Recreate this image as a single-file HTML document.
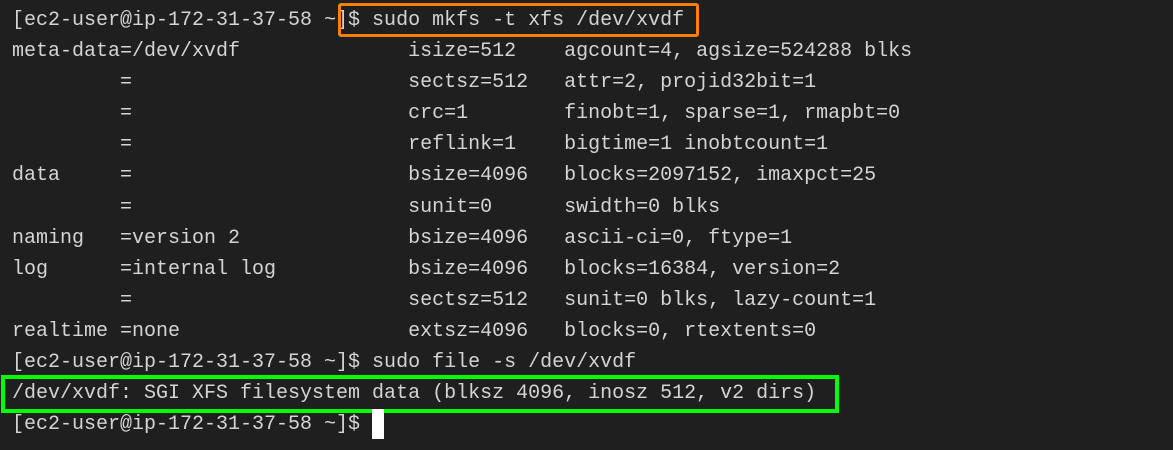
<!DOCTYPE html>
<html><head><meta charset="utf-8"><style>
html,body{margin:0;padding:0;width:1173px;height:450px;background:#1f1f1f;overflow:hidden}
pre{position:absolute;left:12px;top:5px;margin:0;font-family:"Liberation Mono",monospace;font-size:20px;line-height:31.1px;color:#d4d4d4;letter-spacing:0}
.box{position:absolute;box-sizing:border-box}
</style></head><body>
<pre>[ec2-user@ip-172-31-37-58 ~]$ sudo mkfs -t xfs /dev/xvdf
meta-data=/dev/xvdf              isize=512    agcount=4, agsize=524288 blks
         =                       sectsz=512   attr=2, projid32bit=1
         =                       crc=1        finobt=1, sparse=1, rmapbt=0
         =                       reflink=1    bigtime=1 inobtcount=1
data     =                       bsize=4096   blocks=2097152, imaxpct=25
         =                       sunit=0      swidth=0 blks
naming   =version 2              bsize=4096   ascii-ci=0, ftype=1
log      =internal log           bsize=4096   blocks=16384, version=2
         =                       sectsz=512   sunit=0 blks, lazy-count=1
realtime =none                   extsz=4096   blocks=0, rtextents=0
[ec2-user@ip-172-31-37-58 ~]$ sudo file -s /dev/xvdf
/dev/xvdf: SGI XFS filesystem data (blksz 4096, inosz 512, v2 dirs)
[ec2-user@ip-172-31-37-58 ~]$ </pre>
<div class="box" style="left:338px;top:3px;width:361px;height:34px;border:3px solid #ff8000;border-radius:3px"></div>
<div class="box" style="left:1px;top:375px;width:838px;height:38px;border:4px solid #00ff00"></div>
<div class="box" style="left:372px;top:409px;width:12px;height:30px;background:#fff"></div>
</body></html>
